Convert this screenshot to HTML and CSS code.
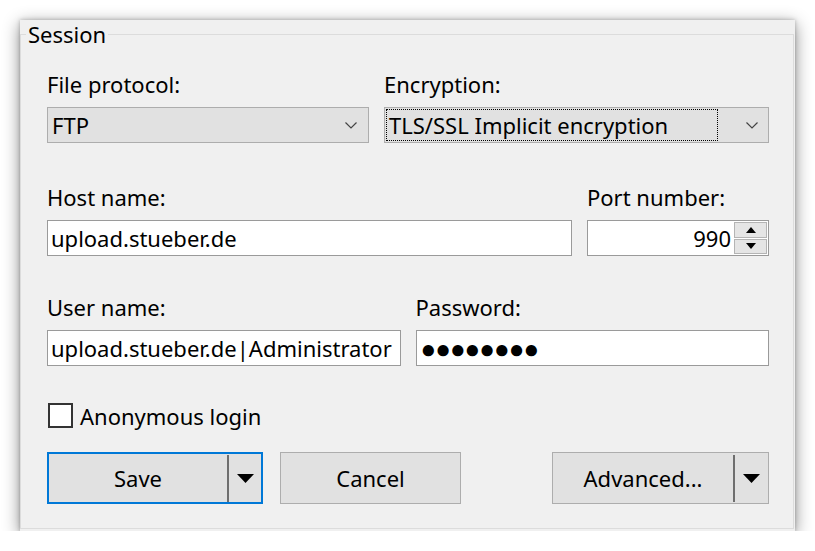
FILE: index.html
```html
<!DOCTYPE html>
<html lang="en">
<head>
    <meta charset="UTF-8">
    <title>Session</title>
    <link rel="stylesheet" href="styles.css">
</head>
<body>

    <div class="window">
        <fieldset class="group">
            <legend>Session</legend>
            <div class="group-body">

                <div class="row row-protocol">
                    <div class="field">
                        <label>File protocol:</label>
                        <div class="combo">
                            <span class="combo-text">FTP</span>
                            <svg class="chevron" width="12" height="7" viewBox="0 0 12 7"><path d="M0.5 0.5 L6 6 L11.5 0.5" fill="none" stroke="#444" stroke-width="1.2"/></svg>
                        </div>
                    </div>
                    <div class="field">
                        <label>Encryption:</label>
                        <div class="combo focused">
                            <span class="combo-text">TLS/SSL Implicit encryption</span>
                            <svg class="chevron" width="12" height="7" viewBox="0 0 12 7"><path d="M0.5 0.5 L6 6 L11.5 0.5" fill="none" stroke="#444" stroke-width="1.2"/></svg>
                        </div>
                    </div>
                </div>

                <div class="row row-host">
                    <div class="field">
                        <label>Host name:</label>
                        <div class="edit">upload.stueber.de</div>
                    </div>
                    <div class="field">
                        <label>Port number:</label>
                        <div class="edit spin">
                            <span class="spin-value">990</span>
                            <div class="spin-buttons">
                                <span class="spin-btn"><svg width="10" height="6" viewBox="0 0 10 6"><path d="M0 6 L5 0 L10 6 Z" fill="#000"/></svg></span>
                                <span class="spin-btn"><svg width="10" height="6" viewBox="0 0 10 6"><path d="M0 0 L5 6 L10 0 Z" fill="#000"/></svg></span>
                            </div>
                        </div>
                    </div>
                </div>

                <div class="row row-user">
                    <div class="field">
                        <label>User name:</label>
                        <div class="edit">upload.stueber.de|Administrator</div>
                    </div>
                    <div class="field">
                        <label>Password:</label>
                        <div class="edit password">●●●●●●●●</div>
                    </div>
                </div>

                <div class="check">
                    <span class="check-box"></span>
                    <span>Anonymous login</span>
                </div>

                <div class="buttons">
                    <div class="btn split default">
                        <span class="btn-main">Save</span>
                        <span class="btn-drop"><svg width="17" height="9" viewBox="0 0 17 9"><path d="M0 0 L17 0 L8.5 9 Z" fill="#000"/></svg></span>
                    </div>
                    <div class="btn cancel">Cancel</div>
                    <div class="btn split advanced">
                        <span class="btn-main">Advanced...</span>
                        <span class="btn-drop"><svg width="17" height="9" viewBox="0 0 17 9"><path d="M0 0 L17 0 L8.5 9 Z" fill="#000"/></svg></span>
                    </div>
                </div>

            </div>
        </fieldset>
    </div>

</body>
</html>
```

FILE: styles.css
```css
* {
    margin: 0;
    padding: 0;
    box-sizing: border-box;
}

body {
    background-color: #ffffff;
    font-family: "Noto Sans", "Open Sans", sans-serif;
    font-size: 22px;
    line-height: 28px;
    color: #000;
}

.window {
    margin: 20px 0 0 20px;
    width: 775px;
    height: 511px;
    background-color: #f0f0f0;
    box-shadow: 0 4px 16px rgba(0, 0, 0, 0.45), 0 0 4px rgba(0, 0, 0, 0.25);
}

.group {
    width: 774px;
    height: 509px;
    border: 1px solid #dcdcdc;
    padding: 0;
}

.group legend {
    margin-left: 5px;
    padding: 0 2px;
    line-height: 28px;
}

.group-body {
    padding: 22px 24px 0 26px;
}

.row {
    display: grid;
    column-gap: 15px;
}

.row-protocol {
    grid-template-columns: 322px 1fr;
}

.row-host {
    grid-template-columns: 1fr 182px;
    margin-top: 40px;
}

.row-user {
    grid-template-columns: 1fr 1fr;
    margin-top: 37px;
}

.field {
    display: flex;
    flex-direction: column;
    gap: 9px;
}

.field label {
    height: 28px;
}

/* drop-down lists */
.combo {
    height: 36px;
    display: flex;
    align-items: center;
    background-color: #e1e1e1;
    border: 1px solid #adadad;
    padding: 1px 11px 1px 4px;
}

.combo-text {
    flex: 1;
}

.combo.focused {
    padding: 1px 10px 1px 1px;
}

.combo.focused .combo-text {
    height: 32px;
    line-height: 30px;
    padding-left: 2px;
    margin-right: 28px;
    border: 1px dotted #000;
}

/* text boxes */
.edit {
    height: 36px;
    background-color: #fff;
    border: 1px solid #9a9a9a;
    padding: 3px 3px;
    white-space: nowrap;
    overflow: hidden;
}

.password {
    font-size: 26px;
    letter-spacing: -1px;
    padding-left: 4px;
}

.spin {
    display: flex;
    padding: 1px;
}

.spin-value {
    flex: 1;
    text-align: right;
    padding: 2px 3px 0 0;
}

.spin-buttons {
    width: 33px;
    display: flex;
    flex-direction: column;
    gap: 1px;
}

.spin-btn {
    flex: 1;
    display: flex;
    align-items: center;
    justify-content: center;
    background-color: #e5e5e5;
    border: 1px solid #b4b4b4;
}

/* check box */
.check {
    display: flex;
    align-items: center;
    gap: 7px;
    margin-top: 37px;
    margin-left: 1px;
    height: 25px;
}

.check-box {
    width: 25px;
    height: 25px;
    background-color: #fff;
    border: 2px solid #333;
}

/* buttons */
.buttons {
    display: flex;
    margin-top: 24px;
    gap: 17px;
}

.btn {
    height: 52px;
    background-color: #e1e1e1;
    border: 1px solid #adadad;
    display: flex;
    align-items: center;
    justify-content: center;
}

.split {
    justify-content: stretch;
}

.btn-main {
    flex: 1;
    text-align: center;
}

.btn-drop {
    width: 35px;
    height: 47px;
    display: flex;
    align-items: center;
    justify-content: center;
    border-left: 2px solid #6e6e6e;
}

.default {
    width: 216px;
    border: 2px solid #0078d7;
}

.default .btn-drop {
    width: 34px;
}

.cancel {
    width: 181px;
}

.advanced {
    width: 217px;
    margin-left: auto;
}
```
